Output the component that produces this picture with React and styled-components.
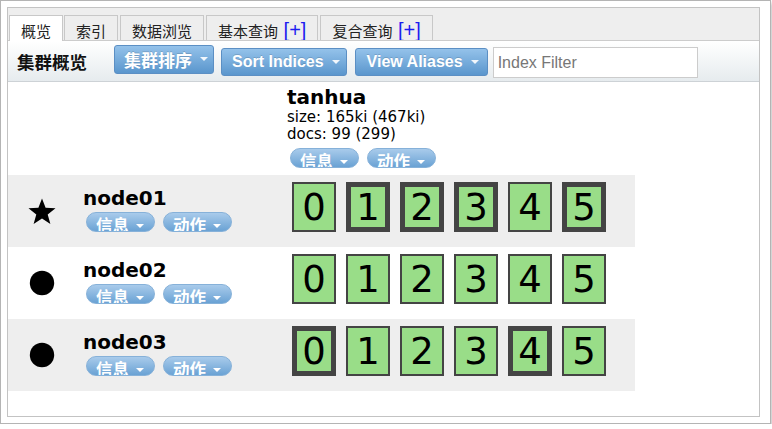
import React from 'react';
import styled, { createGlobalStyle } from 'styled-components';

const GlobalStyle = createGlobalStyle`
  body {
    margin: 0;
    background: #fff;
    font-family: "DejaVu Sans", "Noto Sans CJK SC", sans-serif;
  }
`;

const CJK = '"Noto Sans CJK SC", "DejaVu Sans", sans-serif';

const tabs = [
  { label: '概览', active: true },
  { label: '索引' },
  { label: '数据浏览' },
  { label: '基本查询', plus: true },
  { label: '复合查询', plus: true },
];

const nodes = [
  { name: 'node01', master: true, primaries: [false, true, true, true, false, true] },
  { name: 'node02', primaries: [false, false, false, false, false, false] },
  { name: 'node03', primaries: [true, false, false, false, true, false] },
];

const Star = () => (
  <svg width="28" height="27" viewBox="0 0 28 27">
    <polygon
      points="14,0.5 17.6,9.8 27.5,10.2 19.7,16.4 22.4,26 14,20.5 5.6,26 8.3,16.4 0.5,10.2 10.4,9.8"
      fill="#000"
    />
  </svg>
);

const Dot = () => (
  <svg width="26" height="26" viewBox="0 0 26 26">
    <circle cx="13" cy="13" r="12.2" fill="#000" />
  </svg>
);

const PillButton = ({ children }) => (
  <Pill>
    <PillText>{children}</PillText>
    <PillCaret />
  </Pill>
);

const App = () => {
  return (
    <>
      <GlobalStyle />
      <Frame>
        <Window>
          <TabBar>
            {tabs.map((t) => (
              <Tab key={t.label} active={t.active}>
                {t.label}
                {t.plus && <Plus> [+]</Plus>}
              </Tab>
            ))}
          </TabBar>
          <Toolbar>
            <Title>集群概览</Title>
            <ToolButton cjk>集群排序<Caret /></ToolButton>
            <ToolButton>Sort Indices<Caret /></ToolButton>
            <ToolButton wide>View Aliases<Caret /></ToolButton>
            <FilterInput placeholder="Index Filter" />
          </Toolbar>
          <Table>
            <HeaderRow>
              <SymbolCell />
              <NameCell />
              <IndexCell>
                <IndexName>tanhua</IndexName>
                <Stat>size: 165ki (467ki)</Stat>
                <Stat>docs: 99 (299)</Stat>
                <PillRow>
                  <PillButton>信息</PillButton>
                  <PillButton>动作</PillButton>
                </PillRow>
              </IndexCell>
            </HeaderRow>
            {nodes.map((n, i) => (
              <NodeRow key={n.name} striped={i % 2 === 0}>
                <SymbolCell>{n.master ? <Star /> : <Dot />}</SymbolCell>
                <NameCell>
                  <NodeName>{n.name}</NodeName>
                  <PillRow tight>
                    <PillButton>信息</PillButton>
                    <PillButton>动作</PillButton>
                  </PillRow>
                </NameCell>
                <ShardCell>
                  {n.primaries.map((p, s) => (
                    <Shard key={s} primary={p}>{s}</Shard>
                  ))}
                </ShardCell>
              </NodeRow>
            ))}
          </Table>
        </Window>
      </Frame>
    </>
  );
};

export default App;

// styled components

const Frame = styled.div`
  width: 771px;
  height: 424px;
  box-sizing: border-box;
  border: 1px solid #b4b4b4;
  box-shadow: 2px 3px 4px rgba(0, 0, 0, 0.22);
  padding: 6px;
  background: #fff;
`;

const Window = styled.div`
  width: 753px;
  height: 410px;
  box-sizing: border-box;
  border: 1px solid #c3c3c3;
  display: flex;
  flex-direction: column;
`;

const TabBar = styled.div`
  display: flex;
  align-items: flex-end;
  height: 33px;
  box-sizing: border-box;
  padding: 7px 0 0 1px;
  background: #eeeeee;
  border-bottom: 1px solid #cccccc;
`;

const Tab = styled.div`
  height: ${(p) => (p.active ? '26px' : '25px')};
  margin-bottom: ${(p) => (p.active ? '-1px' : '0')};
  margin-right: ${(p) => (p.active ? '1px' : '2px')};
  box-sizing: border-box;
  padding: 5px 11px 0;
  overflow: hidden;
  border: 1px solid #c8c8c8;
  border-bottom: none;
  background: ${(p) => (p.active ? '#fff' : '#eeeeee')};
  font-family: ${CJK};
  font-size: 15px;
  line-height: 19px;
  color: #222;
  white-space: pre;
`;

const Plus = styled.span`
  font-family: "Liberation Sans", sans-serif;
  color: #1c1cf0;
  font-size: 20px;
`;

const Toolbar = styled.div`
  display: flex;
  align-items: center;
  height: 41px;
  box-sizing: border-box;
  padding: 0 0 0 9px;
  background: linear-gradient(#ffffff, #e6ebee);
  border-bottom: 1px solid #cdd2d6;
`;

const Title = styled.div`
  font-family: ${CJK};
  font-weight: bold;
  font-size: 17.5px;
  color: #111;
  margin-right: 27px;
`;

const ToolButton = styled.div`
  display: flex;
  align-items: center;
  height: ${(p) => (p.cjk ? '29px' : '28px')};
  margin-top: ${(p) => (p.cjk ? '-4px' : '1px')};
  box-sizing: border-box;
  padding: ${(p) => (p.cjk ? '0 5px 0 9px' : p.wide ? '0 8px 0 11px' : '0 6px 0 10px')};
  margin-right: ${(p) => (p.cjk ? '7px' : p.wide ? '5px' : '8px')};
  border: 1px solid #5b8fc4;
  border-radius: 3px;
  background: linear-gradient(#94c2ea, #5a96cd);
  color: #fff;
  font-family: ${(p) => (p.cjk ? CJK : '"Liberation Sans", sans-serif')};
  font-weight: bold;
  font-size: ${(p) => (p.cjk ? '17px' : '16px')};
  white-space: nowrap;
  text-shadow: 0 -1px 0 rgba(0, 0, 0, 0.15);
`;

const Caret = styled.span`
  display: inline-block;
  margin-left: 8px;
  width: 0;
  height: 0;
  border-left: 4px solid transparent;
  border-right: 4px solid transparent;
  border-top: 4px solid #fff;
  opacity: 0.9;
`;

const FilterInput = styled.input`
  width: 205px;
  height: 31px;
  margin-top: 3px;
  box-sizing: border-box;
  border: 1px solid #cccccc;
  padding: 0 4px;
  font-family: "Liberation Sans", sans-serif;
  font-size: 16px;
  outline: none;
  &::placeholder {
    color: #777;
  }
`;

const Table = styled.div`
  width: 627px;
  display: flex;
  flex-direction: column;
`;

const HeaderRow = styled.div`
  display: flex;
  height: 93px;
  background: #fff;
`;

const NodeRow = styled.div`
  display: flex;
  height: 72px;
  background: ${(p) => (p.striped ? '#eeeeee' : '#fff')};
`;

const SymbolCell = styled.div`
  width: 71px;
  box-sizing: border-box;
  padding-right: 3px;
  display: flex;
  align-items: center;
  justify-content: center;
`;

const NameCell = styled.div`
  width: 204px;
  box-sizing: border-box;
  padding: 11px 0 0 4px;
`;

const IndexCell = styled.div`
  flex: 1;
  padding: 4px 0 0 4px;
`;

const IndexName = styled.div`
  font-weight: bold;
  font-size: 20px;
  line-height: 23px;
  color: #000;
`;

const Stat = styled.div`
  font-size: 15px;
  line-height: 17px;
  color: #000;
`;

const NodeName = styled.div`
  font-weight: bold;
  font-size: 20px;
  line-height: 24px;
  color: #000;
`;

const PillRow = styled.div`
  display: flex;
  gap: 8px;
  margin: ${(p) => (p.tight ? '2px 0 0 3px' : '5px 0 0 3px')};
`;

const Pill = styled.div`
  display: flex;
  align-items: flex-start;
  height: 20px;
  box-sizing: border-box;
  padding: 0 10px 0 9px;
  overflow: hidden;
  border: 1px solid #86b1d9;
  border-radius: 10px;
  background: linear-gradient(#a9cbeb, #6aa2d4);
`;

const PillText = styled.span`
  margin-top: 4px;
  font-family: ${CJK};
  font-weight: bold;
  font-size: 16.5px;
  line-height: 17px;
  color: #fff;
  white-space: nowrap;
`;

const PillCaret = styled.span`
  margin: 11px 0 0 7px;
  width: 0;
  height: 0;
  border-left: 4px solid transparent;
  border-right: 4px solid transparent;
  border-top: 4px solid #fff;
`;

const ShardCell = styled.div`
  flex: 1;
  display: flex;
  padding: 7px 0 0 4px;
`;

const Shard = styled.div`
  width: 44px;
  height: 50px;
  margin: 0 5px;
  box-sizing: border-box;
  border: ${(p) => (p.primary ? '5px' : '2px')} solid #444444;
  background: #99dd88;
  display: flex;
  align-items: center;
  justify-content: center;
  font-size: 37px;
  line-height: 1;
  color: #000;
`;
